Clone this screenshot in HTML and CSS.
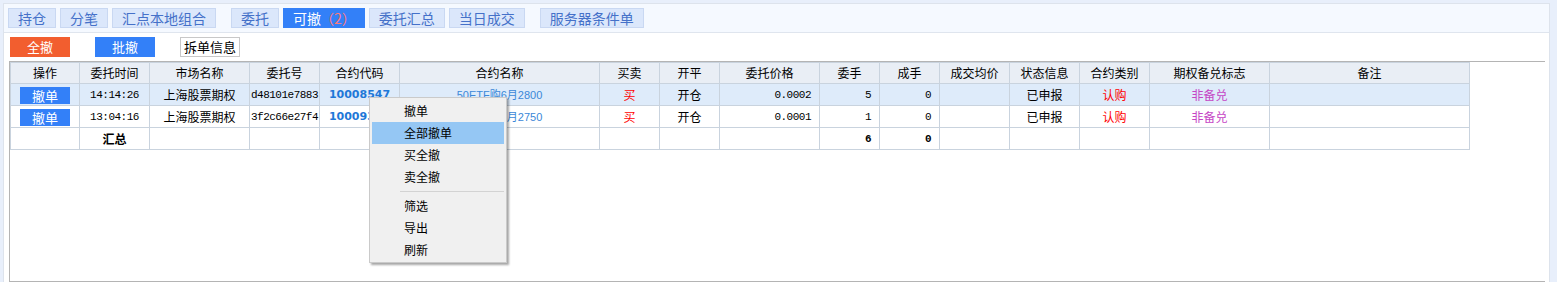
FILE: index.html
```html
<!DOCTYPE html>
<html lang="zh">
<head>
<meta charset="utf-8">
<title>可撤</title>
<link rel="stylesheet" href="styles.css">
</head>
<body>
<div class="panel">
  <div class="tabbar">
    <div class="tabgroup">
      <span class="tab">持仓</span>
      <span class="tab">分笔</span>
      <span class="tab">汇点本地组合</span>
    </div>
    <div class="tabgroup">
      <span class="tab">委托</span>
      <span class="tab active">可撤<span class="count">（2）</span></span>
      <span class="tab">委托汇总</span>
      <span class="tab">当日成交</span>
    </div>
    <div class="tabgroup">
      <span class="tab">服务器条件单</span>
    </div>
  </div>
  <div class="toolbar">
    <span class="btn btn-orange">全撤</span>
    <span class="btn btn-blue">批撤</span>
    <span class="btn btn-plain">拆单信息</span>
  </div>
  <div class="grid">
    <table class="orders">
      <colgroup>
        <col class="w69"><col class="w70"><col class="w100"><col class="w70"><col class="w80"><col class="w200">
        <col class="w60"><col class="w60"><col class="w100"><col class="w60"><col class="w60">
        <col class="w70"><col class="w70"><col class="w70"><col class="w120"><col class="w200">
      </colgroup>
      <thead>
        <tr>
          <th>操作</th><th>委托时间</th><th>市场名称</th><th>委托号</th><th>合约代码</th><th>合约名称</th>
          <th>买卖</th><th>开平</th><th>委托价格</th><th>委手</th><th>成手</th><th>成交均价</th>
          <th>状态信息</th><th>合约类别</th><th>期权备兑标志</th><th>备注</th>
        </tr>
      </thead>
      <tbody>
        <tr class="selected">
          <td><span class="cellbtn">撤单</span></td>
          <td class="mono">14:14:26</td>
          <td>上海股票期权</td>
          <td class="mono">d48101e7883</td>
          <td class="code">10008547</td>
          <td class="name">50ETF购6月2800</td>
          <td class="red">买</td>
          <td>开仓</td>
          <td class="mono num">0.0002</td>
          <td class="mono num">5</td>
          <td class="mono num">0</td>
          <td></td>
          <td>已申报</td>
          <td class="red">认购</td>
          <td class="purple">非备兑</td>
          <td></td>
        </tr>
        <tr>
          <td><span class="cellbtn">撤单</span></td>
          <td class="mono">13:04:16</td>
          <td>上海股票期权</td>
          <td class="mono">3f2c66e27f4</td>
          <td class="code">10009387</td>
          <td class="name">50ETF购6月2750</td>
          <td class="red">买</td>
          <td>开仓</td>
          <td class="mono num">0.0001</td>
          <td class="mono num">1</td>
          <td class="mono num">0</td>
          <td></td>
          <td>已申报</td>
          <td class="red">认购</td>
          <td class="purple">非备兑</td>
          <td></td>
        </tr>
        <tr>
          <td></td>
          <td class="bold">汇总</td>
          <td></td><td></td><td></td><td></td><td></td><td></td><td></td>
          <td class="mono num bold">6</td>
          <td class="mono num bold">0</td>
          <td></td><td></td><td></td><td></td><td></td>
        </tr>
      </tbody>
    </table>
  </div>
</div>
<div class="ctxmenu">
  <div class="item">撤单</div>
  <div class="item hover">全部撤单</div>
  <div class="item">买全撤</div>
  <div class="item">卖全撤</div>
  <div class="sep"></div>
  <div class="item">筛选</div>
  <div class="item">导出</div>
  <div class="item">刷新</div>
</div>
</body>
</html>
```

FILE: styles.css
```css
* { box-sizing: border-box; }
html, body { margin: 0; padding: 0; }
body {
  background: #e8effb;
  font-family: "Noto Sans CJK SC", "Microsoft YaHei", sans-serif;
  color: #000;
  width: 1557px;
  height: 282px;
  overflow: hidden;
  position: relative;
}
.panel {
  margin: 3px 7px 0 3px;
  border: 1px solid #dde3ec;
  border-bottom: none;
  background: #fff;
  height: 279px;
}
.tabbar {
  height: 29px;
  background: #f5f9ff;
  border-bottom: 1px solid #dfe5ee;
  padding: 4px 0 0 4px;
  display: flex;
  gap: 15px;
}
.tabgroup { display: flex; gap: 4px; }
.tab {
  height: 20px;
  padding: 0 9px;
  border: 1px solid #c9d8f2;
  background: #dbe7fb;
  color: #4571c9;
  font-size: 14px;
  line-height: 18px;
  white-space: nowrap;
}
.tab.active {
  background: #3380f8;
  border-color: #3380f8;
  color: #fff;
}
.tab .count { color: #ff7a7a; margin-left: -1px; margin-right: -1px; }
.toolbar {
  height: 28px;
  padding: 4px 0 4px 6px;
  display: flex;
  gap: 25px;
}
.btn {
  width: 60px;
  height: 20px;
  font-size: 13px;
  line-height: 20px;
  text-align: center;
}
.btn-orange { background: #f25e2f; color: #fff; }
.btn-blue { background: #3380f8; color: #fff; }
.btn-plain { background: #fff; border: 1px solid #c8c8c8; line-height: 18px; color: #000; }
.grid {
  margin: 0 4px 0 5px;
  height: 221px;
  border-top: 1px solid #b4b4b4;
  border-left: 1px solid #b4b4b4;
  border-bottom: 1px solid #b4b4b4;
}
.orders {
  border-collapse: separate;
  border-spacing: 0;
  table-layout: fixed;
  width: 1460px;
  border-top: 1px solid #c9d3de;
  border-left: 1px solid #c9d3de;
  font-size: 12px;
}
.w60 { width: 60px; }
.w69 { width: 69px; }
.w70 { width: 70px; }
.w80 { width: 80px; }
.w100 { width: 100px; }
.w120 { width: 120px; }
.w200 { width: 200px; }
.orders th, .orders td {
  border-right: 1px solid #c9d3de;
  border-bottom: 1px solid #c9d3de;
  padding: 0;
  text-align: center;
  white-space: nowrap;
  overflow: hidden;
  font-weight: normal;
  line-height: 16px;
}
.orders th {
  height: 21px;
  background: #e9eef5;
}
.orders td { height: 22px; }
.orders tr.selected td { background: #deebfa; }
.mono {
  font-family: "Liberation Mono", "Noto Sans CJK SC", monospace;
  font-size: 11px;
  letter-spacing: -0.5px;
}
.num { text-align: right !important; padding-right: 8px !important; }
.code {
  font-family: "DejaVu Sans", sans-serif;
  font-weight: bold !important;
  font-size: 11px;
  color: #1f78d8;
}
.name {
  font-family: "Liberation Sans", "Noto Sans CJK SC", sans-serif;
  font-size: 11px;
  color: #3b88d8;
}
.red { color: #ff0000; }
.purple { color: #c545c5; }
.bold { font-weight: bold !important; }
.cellbtn {
  display: inline-block;
  width: 50px;
  height: 17px;
  background: #3380f8;
  color: #fff;
  font-size: 13px;
  line-height: 17px;
  vertical-align: middle;
}
.ctxmenu {
  position: absolute;
  left: 369px;
  top: 97px;
  width: 138px;
  height: 166px;
  background: #f0f0f0;
  border: 1px solid #cacaca;
  box-shadow: 2px 2px 2px rgba(0, 0, 0, 0.35);
  padding: 2px 2px 1px 2px;
  font-size: 12px;
}
.ctxmenu .item {
  height: 22px;
  line-height: 22px;
  padding-left: 32px;
}
.ctxmenu .item.hover { background: #95c7f4; }
.ctxmenu .sep {
  height: 7px;
  margin-left: 28px;
  padding-top: 3px;
}
.ctxmenu .sep::before {
  content: "";
  display: block;
  border-top: 1px solid #d3d3d3;
}
```
